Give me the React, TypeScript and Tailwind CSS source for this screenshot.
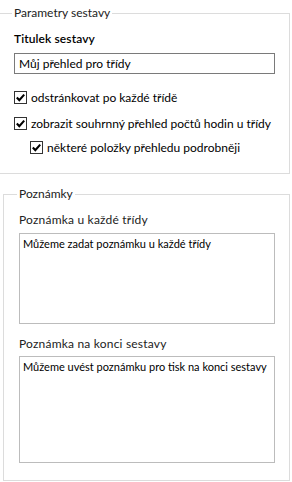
import React from "react";

const font = { fontFamily: 'Lato, "Liberation Sans", sans-serif' };

const CheckBox = () => (
  <span className="flex h-[13px] w-[13px] shrink-0 items-center justify-center border border-[#333] bg-white">
    <svg width="11" height="11" viewBox="0 0 11 11">
      <path d="M1.8 5.6 L4.3 8.1 L9.2 2.6" fill="none" stroke="#000" strokeWidth="2.1" />
    </svg>
  </span>
);

const CheckRow = ({ label, className }: { label: string; className?: string }) => (
  <label className={"flex h-[13px] items-center gap-[4px] whitespace-nowrap " + (className ?? "")}>
    <CheckBox />
    <span className="text-[12px] leading-[16px] text-[#000]">{label}</span>
  </label>
);

export default function App() {
  return (
    <div className="h-[482px] w-[292px] overflow-hidden bg-white text-[12px] leading-[16px] text-[#000]" style={font}>
      {/* Parametry sestavy */}
      <fieldset className="mt-[5px] h-[169px] w-[290px] border-y border-r border-l-0 border-[#dcdcdc] pl-[14px]">
        <legend className="-ml-[2px] whitespace-nowrap px-[2px] text-[#222]">Parametry sestavy</legend>
        <div className="mt-[10px] font-semibold tracking-[0.1px]">Titulek sestavy</div>
        <div className="mt-[6px] flex h-[21px] w-[261px] items-center border border-[#7a7a7a] px-[4px]">
          Můj přehled pro třídy
        </div>
        <CheckRow label="odstránkovat po každé třídě" className="mt-[17px]" />
        <CheckRow label="zobrazit souhrnný přehled počtů hodin u třídy" className="mt-[13px]" />
        <CheckRow label="některé položky přehledu podrobněji" className="ml-[16px] mt-[11px]" />
      </fieldset>

      {/* Poznámky */}
      <fieldset className="ml-[3px] mt-[12px] h-[295px] w-[287px] border border-[#dcdcdc] pl-[15px]">
        <legend className="-ml-[2px] whitespace-nowrap px-[2px] text-[#222]">Poznámky</legend>
        <div className="mt-[10px] tracking-[0.2px] text-[#222]">Poznámka u každé třídy</div>
        <div className="mt-[5px] h-[91px] w-[256px] whitespace-nowrap border border-[#bcbcbc] px-[3px] pt-[3px] text-[11px] leading-[14px]">
          Můžeme zadat poznámku u každé třídy
        </div>
        <div className="mt-[12px] tracking-[0.2px] text-[#222]">Poznámka na konci sestavy</div>
        <div className="mt-[4px] h-[107px] w-[256px] whitespace-nowrap border border-[#bcbcbc] px-[3px] pt-[3px] text-[11px] leading-[14px]">
          Můžeme uvést poznámku pro tisk na konci sestavy
        </div>
      </fieldset>
    </div>
  );
}
